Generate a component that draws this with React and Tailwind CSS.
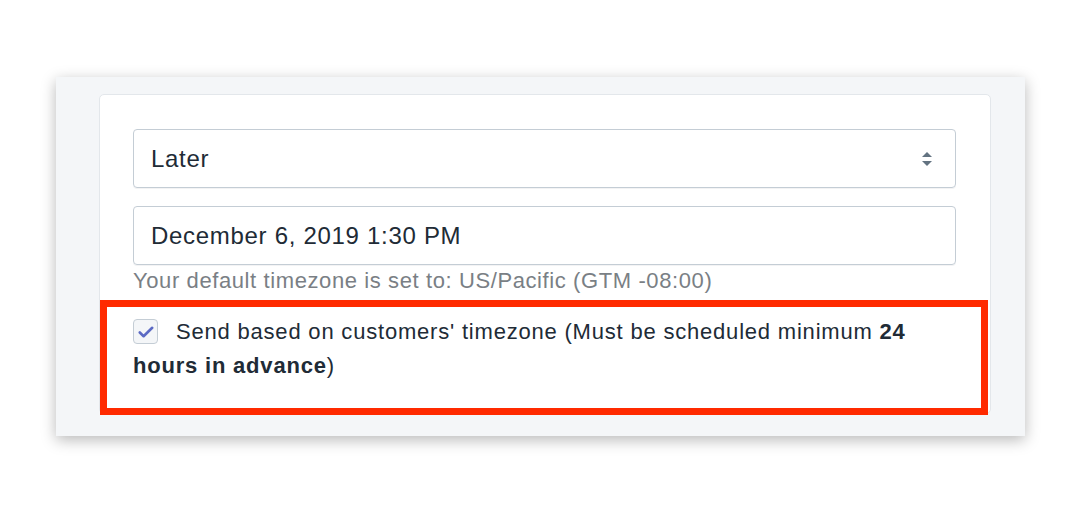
export default function App() {
  return (
    <div className="w-[1080px] h-[512px] bg-white pt-[77px] pl-[56px]" style={{ fontFamily: '"Liberation Sans", Arial, sans-serif' }}>
      <div className="w-[969px] h-[359px] bg-[#f4f6f8] pt-[17px] pl-[43px] shadow-[0_4px_14px_rgba(0,0,0,0.28)]">
        <div className="relative w-[892px] h-[320px] bg-white rounded-[5px] border border-[#e3e7eb] pt-[34px] pl-[33px] pr-[34px]">
          {/* select */}
          <div className="flex items-center justify-between h-[59px] rounded-[4px] border border-[#c4cdd5] shadow-[0_1px_0_rgba(22,29,37,0.05)] pl-[17px] pr-[22px]">
            <span className="text-[24px] tracking-[0.7px] text-[#212b36]">Later</span>
            <svg width="12" height="18" viewBox="0 0 12 18" className="text-[#637381]">
              <path d="M6 2 L11 7 H1 Z" fill="currentColor" />
              <path d="M6 16 L11 11 H1 Z" fill="currentColor" />
            </svg>
          </div>
          {/* date */}
          <div className="mt-[18px] flex items-center h-[59px] rounded-[4px] border border-[#c4cdd5] shadow-[0_1px_0_rgba(22,29,37,0.05)] pl-[17px]">
            <span className="text-[24px] tracking-[0.7px] text-[#212b36]">December 6, 2019 1:30 PM</span>
          </div>
          <p className="mt-[3px] text-[22px] leading-[26px] tracking-[0.6px] text-[#7a7f85]">
            Your default timezone is set to: US/Pacific (GTM -08:00)
          </p>
          <div className="mt-[21px] text-[22px] leading-[34px] tracking-[0.8px] text-[#212b36] pr-[40px]">
            <span className="inline-block align-[-5px] w-[25px] h-[25px] mr-[18px] rounded-[4px] border border-[#c4cdd5] bg-[#f4f6f8]">
              <svg width="16" height="12" viewBox="0 0 16 12" className="block mx-auto mt-[5.5px]">
                <path d="M1.8 6.5 L5.6 10.2 L14.2 1.8" fill="none" stroke="#5c6ac4" strokeWidth="2.6" strokeLinecap="round" strokeLinejoin="round" />
              </svg>
            </span>
            Send based on customers' timezone (Must be scheduled minimum <b>24 hours in advance</b>)
          </div>
          {/* annotation box */}
          <div className="absolute left-[0px] top-[205px] w-[888px] h-[115px] border-[7px] border-[#ff2a00]" />
        </div>
      </div>
    </div>
  );
}
